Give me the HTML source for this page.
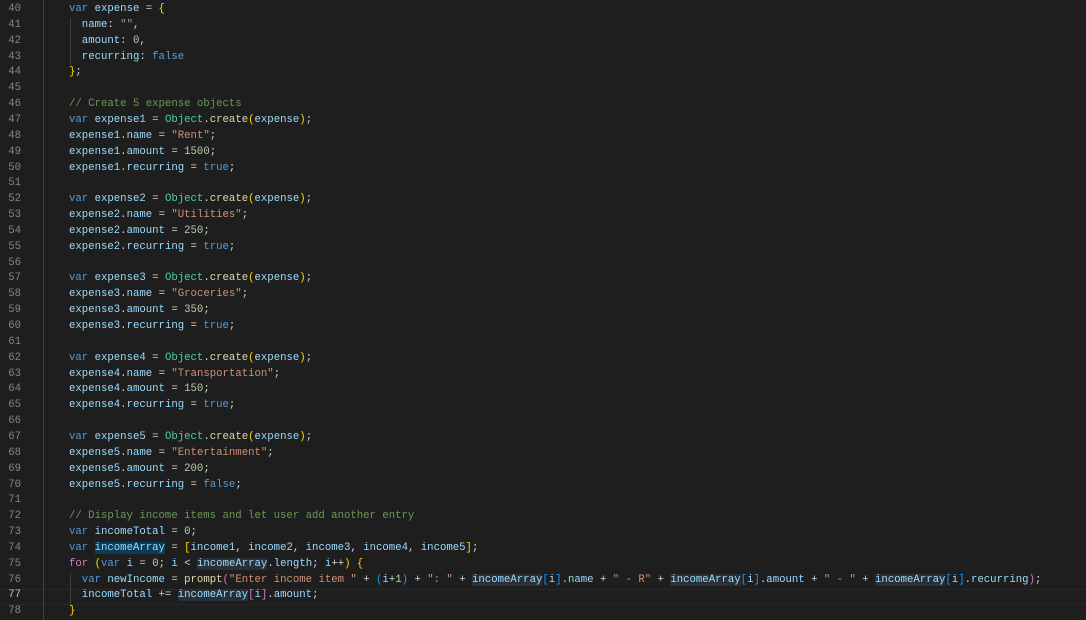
<!DOCTYPE html>
<html><head><meta charset="utf-8"><style>
html,body{margin:0;padding:0;background:#1e1e1e;width:1086px;height:620px;overflow:hidden}
.wrap{position:relative;width:1086px;height:620px;font-family:"Liberation Mono",monospace;font-size:10.67px;}
.l{position:absolute;left:0;height:15.85px;line-height:15.85px;width:1086px;white-space:pre}
.n{position:absolute;left:0;width:21px;text-align:right;color:#858585}
.c{position:absolute;left:69px;color:#d4d4d4}
.k{color:#569cd6}.v{color:#9cdcfe}.s{color:#ce9178}.m{color:#b5cea8}.cm{color:#6a9955}.t{color:#4ec9b0}.f{color:#dcdcaa}.p{color:#c586c0}
.b1{color:#ffd700}.b2{color:#da70d6}.b3{color:#179fff}
.h{background:#2a3037}.sel{background:#0b3c58}
.g{position:absolute;width:1px;background:#404040}
</style></head><body><div class="wrap">
<div style="position:absolute;left:0;top:589.4px;width:1086px;height:14px;border-top:1px solid #282828;border-bottom:1px solid #282828"></div>
<div class="g" style="left:43px;top:0;height:620px"></div>
<div class="g" style="left:70px;top:18px;height:47px"></div>
<div class="g" style="left:70px;top:573px;height:32px"></div>
<div id="lines"></div>
<div class="l" style="top:2px"><span class="n">40</span><span class="c"><span class="k">var</span> <span class="v">expense</span> = <span class="b1">{</span></span></div>
<div class="l" style="top:17.85px"><span class="n">41</span><span class="c">  <span class="v">name</span>: <span class="s">""</span>,</span></div>
<div class="l" style="top:33.7px"><span class="n">42</span><span class="c">  <span class="v">amount</span>: <span class="m">0</span>,</span></div>
<div class="l" style="top:49.55px"><span class="n">43</span><span class="c">  <span class="v">recurring</span>: <span class="k">false</span></span></div>
<div class="l" style="top:65.4px"><span class="n">44</span><span class="c"><span class="b1">}</span>;</span></div>
<div class="l" style="top:81.25px"><span class="n">45</span></div>
<div class="l" style="top:97.1px"><span class="n">46</span><span class="c"><span class="cm">// Create 5 expense objects</span></span></div>
<div class="l" style="top:112.95px"><span class="n">47</span><span class="c"><span class="k">var</span> <span class="v">expense1</span> = <span class="t">Object</span>.<span class="f">create</span><span class="b1">(</span><span class="v">expense</span><span class="b1">)</span>;</span></div>
<div class="l" style="top:128.8px"><span class="n">48</span><span class="c"><span class="v">expense1</span>.<span class="v">name</span> = <span class="s">"Rent"</span>;</span></div>
<div class="l" style="top:144.65px"><span class="n">49</span><span class="c"><span class="v">expense1</span>.<span class="v">amount</span> = <span class="m">1500</span>;</span></div>
<div class="l" style="top:160.5px"><span class="n">50</span><span class="c"><span class="v">expense1</span>.<span class="v">recurring</span> = <span class="k">true</span>;</span></div>
<div class="l" style="top:176.35px"><span class="n">51</span></div>
<div class="l" style="top:192.2px"><span class="n">52</span><span class="c"><span class="k">var</span> <span class="v">expense2</span> = <span class="t">Object</span>.<span class="f">create</span><span class="b1">(</span><span class="v">expense</span><span class="b1">)</span>;</span></div>
<div class="l" style="top:208.05px"><span class="n">53</span><span class="c"><span class="v">expense2</span>.<span class="v">name</span> = <span class="s">"Utilities"</span>;</span></div>
<div class="l" style="top:223.9px"><span class="n">54</span><span class="c"><span class="v">expense2</span>.<span class="v">amount</span> = <span class="m">250</span>;</span></div>
<div class="l" style="top:239.75px"><span class="n">55</span><span class="c"><span class="v">expense2</span>.<span class="v">recurring</span> = <span class="k">true</span>;</span></div>
<div class="l" style="top:255.6px"><span class="n">56</span></div>
<div class="l" style="top:271.45px"><span class="n">57</span><span class="c"><span class="k">var</span> <span class="v">expense3</span> = <span class="t">Object</span>.<span class="f">create</span><span class="b1">(</span><span class="v">expense</span><span class="b1">)</span>;</span></div>
<div class="l" style="top:287.3px"><span class="n">58</span><span class="c"><span class="v">expense3</span>.<span class="v">name</span> = <span class="s">"Groceries"</span>;</span></div>
<div class="l" style="top:303.15px"><span class="n">59</span><span class="c"><span class="v">expense3</span>.<span class="v">amount</span> = <span class="m">350</span>;</span></div>
<div class="l" style="top:319px"><span class="n">60</span><span class="c"><span class="v">expense3</span>.<span class="v">recurring</span> = <span class="k">true</span>;</span></div>
<div class="l" style="top:334.85px"><span class="n">61</span></div>
<div class="l" style="top:350.7px"><span class="n">62</span><span class="c"><span class="k">var</span> <span class="v">expense4</span> = <span class="t">Object</span>.<span class="f">create</span><span class="b1">(</span><span class="v">expense</span><span class="b1">)</span>;</span></div>
<div class="l" style="top:366.55px"><span class="n">63</span><span class="c"><span class="v">expense4</span>.<span class="v">name</span> = <span class="s">"Transportation"</span>;</span></div>
<div class="l" style="top:382.4px"><span class="n">64</span><span class="c"><span class="v">expense4</span>.<span class="v">amount</span> = <span class="m">150</span>;</span></div>
<div class="l" style="top:398.25px"><span class="n">65</span><span class="c"><span class="v">expense4</span>.<span class="v">recurring</span> = <span class="k">true</span>;</span></div>
<div class="l" style="top:414.1px"><span class="n">66</span></div>
<div class="l" style="top:429.95px"><span class="n">67</span><span class="c"><span class="k">var</span> <span class="v">expense5</span> = <span class="t">Object</span>.<span class="f">create</span><span class="b1">(</span><span class="v">expense</span><span class="b1">)</span>;</span></div>
<div class="l" style="top:445.8px"><span class="n">68</span><span class="c"><span class="v">expense5</span>.<span class="v">name</span> = <span class="s">"Entertainment"</span>;</span></div>
<div class="l" style="top:461.65px"><span class="n">69</span><span class="c"><span class="v">expense5</span>.<span class="v">amount</span> = <span class="m">200</span>;</span></div>
<div class="l" style="top:477.5px"><span class="n">70</span><span class="c"><span class="v">expense5</span>.<span class="v">recurring</span> = <span class="k">false</span>;</span></div>
<div class="l" style="top:493.35px"><span class="n">71</span></div>
<div class="l" style="top:509.2px"><span class="n">72</span><span class="c"><span class="cm">// Display income items and let user add another entry</span></span></div>
<div class="l" style="top:525.05px"><span class="n">73</span><span class="c"><span class="k">var</span> <span class="v">incomeTotal</span> = <span class="m">0</span>;</span></div>
<div class="l" style="top:540.9px"><span class="n">74</span><span class="c"><span class="k">var</span> <span class="v sel">incomeArray</span> = <span class="b1">[</span><span class="v">income1</span>, <span class="v">income2</span>, <span class="v">income3</span>, <span class="v">income4</span>, <span class="v">income5</span><span class="b1">]</span>;</span></div>
<div class="l" style="top:556.75px"><span class="n">75</span><span class="c"><span class="p">for</span> <span class="b1">(</span><span class="k">var</span> <span class="v">i</span> = <span class="m">0</span>; <span class="v">i</span> &lt; <span class="v h">incomeArray</span>.<span class="v">length</span>; <span class="v">i</span>++<span class="b1">)</span> <span class="b1">{</span></span></div>
<div class="l" style="top:572.6px"><span class="n">76</span><span class="c">  <span class="k">var</span> <span class="v">newIncome</span> = <span class="f">prompt</span><span class="b2">(</span><span class="s">"Enter income item "</span> + <span class="b3">(</span><span class="v">i</span>+<span class="m">1</span><span class="b3">)</span> + <span class="s">": "</span> + <span class="v h">incomeArray</span><span class="b3">[</span><span class="v">i</span><span class="b3">]</span>.<span class="v">name</span> + <span class="s">" - R"</span> + <span class="v h">incomeArray</span><span class="b3">[</span><span class="v">i</span><span class="b3">]</span>.<span class="v">amount</span> + <span class="s">" - "</span> + <span class="v h">incomeArray</span><span class="b3">[</span><span class="v">i</span><span class="b3">]</span>.<span class="v">recurring</span><span class="b2">)</span>;</span></div>
<div class="l" style="top:588.45px"><span class="n" style="color:#c6c6c6">77</span><span class="c">  <span class="v">incomeTotal</span> += <span class="v h">incomeArray</span><span class="b2">[</span><span class="v">i</span><span class="b2">]</span>.<span class="v">amount</span>;</span></div>
<div class="l" style="top:604.3px"><span class="n">78</span><span class="c"><span class="b1">}</span></span></div>
</div></body></html>
